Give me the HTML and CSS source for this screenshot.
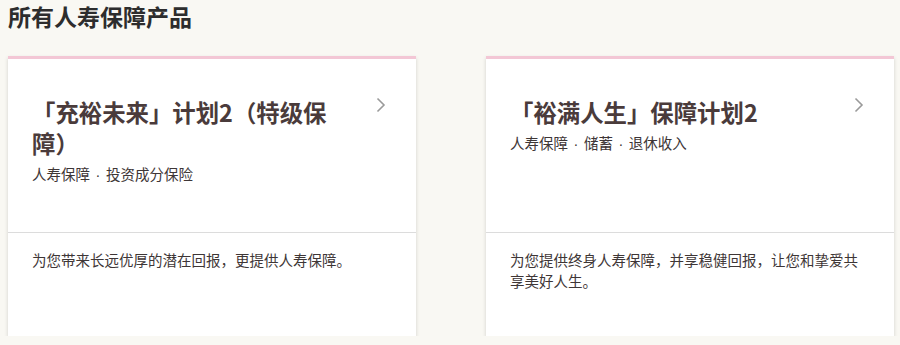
FILE: index.html
```html
<!DOCTYPE html>
<html lang="zh-CN">
<head>
<meta charset="utf-8">
<title>所有人寿保障产品</title>
<link rel="stylesheet" href="styles.css">
</head>
<body>
<main class="page">
  <h1 class="page-title">所有人寿保障产品</h1>
  <div class="grid">
    <a class="card" href="#">
      <div class="card-top">
        <div class="card-head">
          <h2 class="card-title">「充裕未来」计划2（特级保障）</h2>
          <svg class="chev" width="10" height="16" viewBox="0 0 10 16"><polyline points="1.5,1.5 8,8 1.5,14.5" fill="none" stroke="#9a9a9a" stroke-width="1.6"/></svg>
        </div>
        <p class="card-tags">人寿保障<span class="sep"> · </span>投资成分保险</p>
      </div>
      <div class="card-bottom">
        <p class="card-desc">为您带来长远优厚的潜在回报，更提供人寿保障。</p>
      </div>
    </a>
    <a class="card" href="#">
      <div class="card-top">
        <div class="card-head">
          <h2 class="card-title">「裕满人生」保障计划2</h2>
          <svg class="chev" width="10" height="16" viewBox="0 0 10 16"><polyline points="1.5,1.5 8,8 1.5,14.5" fill="none" stroke="#9a9a9a" stroke-width="1.6"/></svg>
        </div>
        <p class="card-tags">人寿保障<span class="sep"> · </span>储蓄<span class="sep"> · </span>退休收入</p>
      </div>
      <div class="card-bottom">
        <p class="card-desc">为您提供终身人寿保障，并享稳健回报，让您和挚爱共享美好人生。</p>
      </div>
    </a>
  </div>
</main>
</body>
</html>
```
FILE: styles.css
```css
html, body {
  margin: 0;
  padding: 0;
  background: #f9f8f3;
}
body {
  font-family: "Noto Sans CJK SC", "Noto Sans", sans-serif;
  color: #333;
}
.page {
  padding: 0 6px 0 8px;
}
.page-title {
  margin: 0;
  font-size: 23px;
  font-weight: 700;
  line-height: 32px;
  color: #2d2d2d;
}
.grid {
  margin-top: 24px;
  display: grid;
  grid-template-columns: 1fr 1fr;
  column-gap: 70px;
  align-items: start;
}
.card {
  display: block;
  height: 280px;
  box-sizing: border-box;
  background: #fff;
  border-top: 3px solid #f3c7d5;
  box-shadow: 0 2px 4px rgba(0, 0, 0, 0.16);
  text-decoration: none;
  color: inherit;
}
.card-top {
  height: 174px;
  box-sizing: border-box;
  padding: 38px 30px 0 24px;
  border-bottom: 1px solid #dcdcdc;
}
.card-head {
  display: flex;
  align-items: flex-start;
  gap: 40px;
}
.card-title {
  flex: 1;
  margin: 0;
  font-size: 23.4px;
  font-weight: 700;
  line-height: 31px;
  color: #4a3b3b;
}
.chev {
  flex: none;
}
.card-tags {
  margin: 5px 0 0;
  font-size: 14.5px;
  line-height: 20px;
  color: #3e3636;
}
.sep {
  font-family: "Liberation Sans", sans-serif;
  padding: 0 1.5px;
}
.card-bottom {
  box-sizing: border-box;
  padding: 17px 24px 0 24px;
}
.card-desc {
  margin: 0;
  font-size: 14.5px;
  line-height: 20.5px;
  color: #3e3636;
}
```
